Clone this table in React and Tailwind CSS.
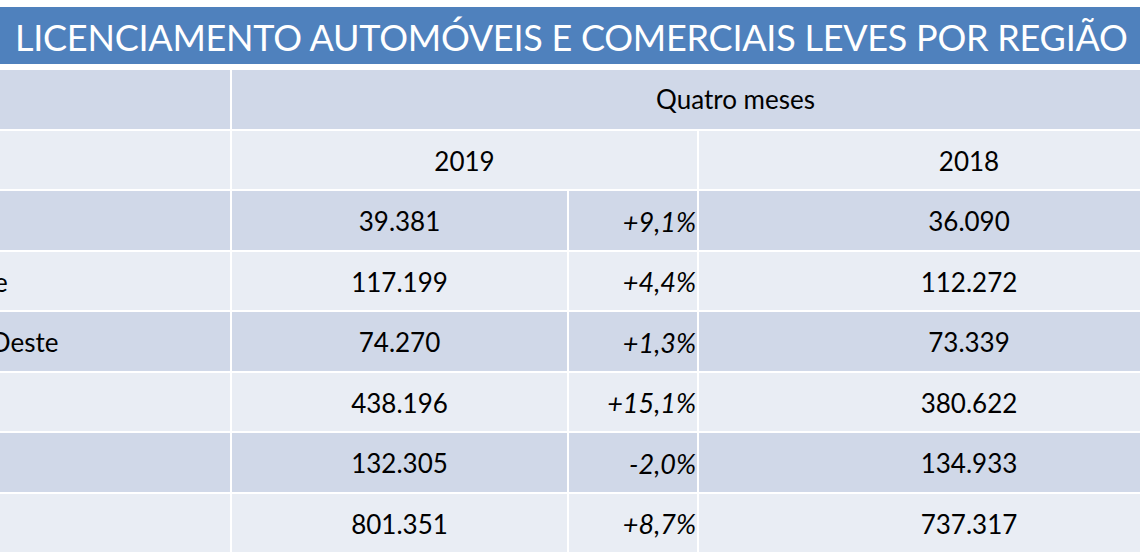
const rows = [
  { label: 'Norte', y2019: '39.381', pct: '+9,1%', y2018: '36.090' },
  { label: 'Nordeste', y2019: '117.199', pct: '+4,4%', y2018: '112.272' },
  { label: 'Centro-Oeste', y2019: '74.270', pct: '+1,3%', y2018: '73.339' },
  { label: 'Sudeste', y2019: '438.196', pct: '+15,1%', y2018: '380.622' },
  { label: 'Sul', y2019: '132.305', pct: '-2,0%', y2018: '134.933' },
  { label: 'Total', y2019: '801.351', pct: '+8,7%', y2018: '737.317' },
];

export default function App() {
  return (
    <div
      className="w-[1140px] h-[560px] overflow-hidden bg-white text-black"
      style={{ fontFamily: 'Lato, "Open Sans", sans-serif' }}
    >
      <div className="mt-[7px] h-[57px] w-[1300px] bg-[#4f81bd] flex items-center pl-[15px]">
        <h1 className="text-white text-[36px] leading-none whitespace-nowrap tracking-[-0.25px] pt-[2px]">
          LICENCIAMENTO AUTOMÓVEIS E COMERCIAIS LEVES POR REGIÃO
        </h1>
      </div>

      <div className="mt-[6px] -ml-[120px] grid grid-cols-[350px_335px_128px_540px] auto-rows-[58.5px] gap-[2px] text-[26px]">
        <div className="bg-[#d0d8e8]" />
        <div className="col-span-3 bg-[#d0d8e8] flex items-center justify-center pt-[1px]">Quatro meses</div>

        <div className="bg-[#e9edf4]" />
        <div className="col-span-2 bg-[#e9edf4] flex items-center justify-center pt-[3px]">2019</div>
        <div className="bg-[#e9edf4] flex items-center justify-center pt-[3px]">2018</div>

        {rows.map((r, i) => {
          const bg = i % 2 === 0 ? 'bg-[#d0d8e8]' : 'bg-[#e9edf4]';
          return [
            <div key={r.label + 'l'} className={`${bg} flex items-center pl-[22px] pt-[3px] whitespace-nowrap`}>
              {r.label}
            </div>,
            <div key={r.label + 'a'} className={`${bg} flex items-center justify-center pt-[3px]`}>
              {r.y2019}
            </div>,
            <div key={r.label + 'p'} className={`${bg} flex items-center justify-end italic pr-[1px] pt-[3px] text-[27px]`}>
              {r.pct}
            </div>,
            <div key={r.label + 'b'} className={`${bg} flex items-center justify-center pt-[3px]`}>
              {r.y2018}
            </div>,
          ];
        })}
      </div>
    </div>
  );
}
